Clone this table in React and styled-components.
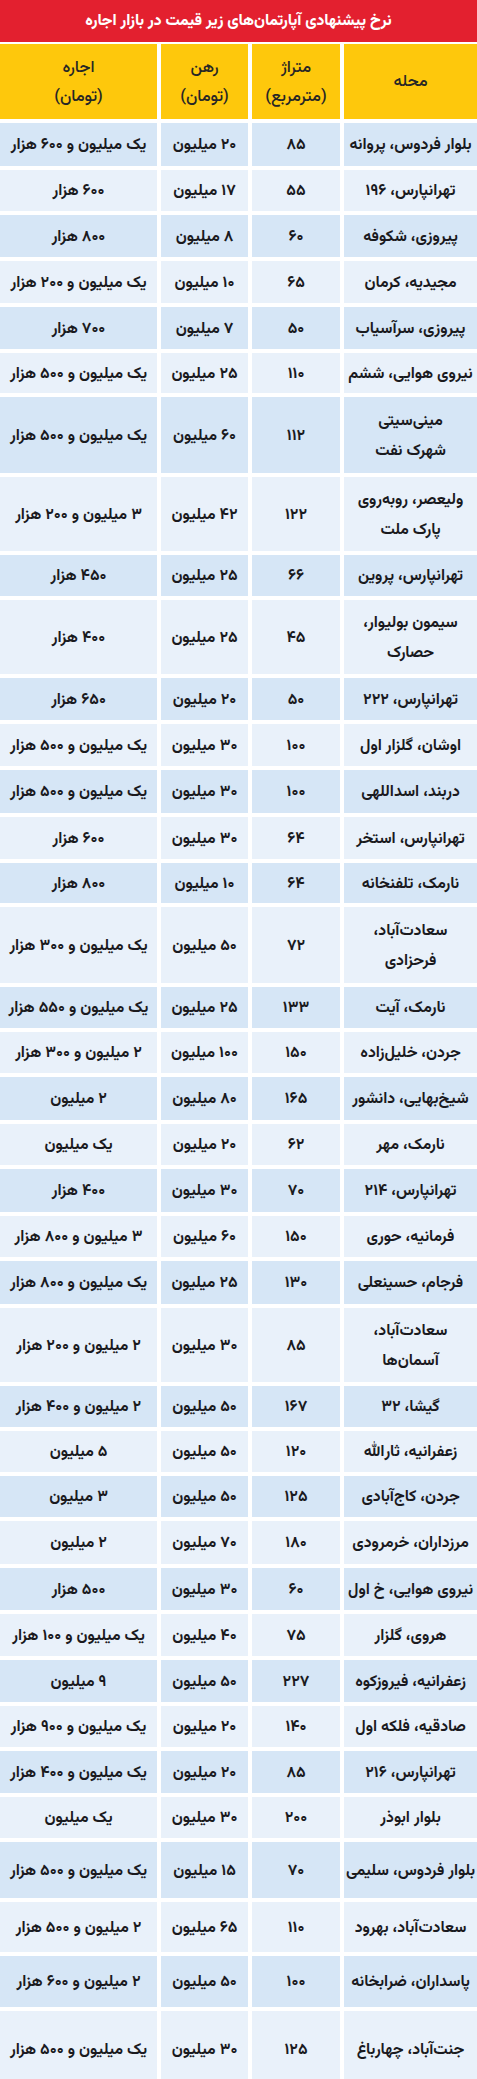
import React from "react";
import styled, { createGlobalStyle } from "styled-components";

const Global = createGlobalStyle`
  html, body { margin: 0; padding: 0; background: #ffffff; }
  body { font-family: "Vazirmatn", "Noto Sans Arabic", "DejaVu Sans", sans-serif; }
`;

const Page = styled.div`
  width: 477px;
  direction: rtl;
  background: #ffffff;
  display: flex;
  flex-direction: column;
`;

const TitleBar = styled.div`
  height: 42px;
  background: #e3202f;
  color: #ffffff;
  display: flex;
  align-items: center;
  justify-content: center;
  font-size: 15.6px;
  font-weight: 800;
  white-space: nowrap;
  padding-bottom: 1px;
  box-sizing: border-box;
`;

const Grid = styled.div`
  margin-top: 2px;
  display: grid;
  grid-template-columns: 133px 88px 87px 157px;
  column-gap: 4px;
  row-gap: 4px;
`;

const HeadCell = styled.div`
  height: 75px;
  background: #fec80c;
  color: #262626;
  display: flex;
  align-items: center;
  justify-content: center;
  text-align: center;
  white-space: pre;
  font-size: 16.5px;
  font-weight: 500;
  line-height: 29px;
  padding-top: 2px;
  box-sizing: border-box;
`;

const Cell = styled.div`
  height: ${(p) => p.$h}px;
  background: ${(p) => (p.$dark ? "#d6e6f6" : "#e9f1fa")};
  color: #1a1a1e;
  display: flex;
  align-items: center;
  justify-content: center;
  text-align: center;
  white-space: pre;
  font-size: 15.8px;
  font-weight: 700;
  line-height: 30px;
  padding-top: 1px;
  box-sizing: border-box;
`;

const rows = [
  ["بلوار فردوس، پروانه", "۸۵", "۲۰ میلیون", "یک میلیون و ۶۰۰ هزار", 43],
  ["تهرانپارس، ۱۹۶", "۵۵", "۱۷ میلیون", "۶۰۰ هزار", 41],
  ["پیروزی، شکوفه", "۶۰", "۸ میلیون", "۸۰۰ هزار", 42],
  ["مجیدیه، کرمان", "۶۵", "۱۰ میلیون", "یک میلیون و ۲۰۰ هزار", 42],
  ["پیروزی، سرآسیاب", "۵۰", "۷ میلیون", "۷۰۰ هزار", 42],
  ["نیروی هوایی، ششم", "۱۱۰", "۲۵ میلیون", "یک میلیون و ۵۰۰ هزار", 40],
  ["مینی‌سیتی\nشهرک نفت", "۱۱۲", "۶۰ میلیون", "یک میلیون و ۵۰۰ هزار", 76],
  ["ولیعصر، روبه‌روی\nپارک ملت", "۱۲۲", "۴۲ میلیون", "۳ میلیون و ۲۰۰ هزار", 74],
  ["تهرانپارس، پروین", "۶۶", "۲۵ میلیون", "۴۵۰ هزار", 41],
  ["سیمون بولیوار،\nحصارک", "۴۵", "۲۵ میلیون", "۴۰۰ هزار", 74],
  ["تهرانپارس، ۲۲۲", "۵۰", "۲۰ میلیون", "۶۵۰ هزار", 42],
  ["اوشان، گلزار اول", "۱۰۰", "۳۰ میلیون", "یک میلیون و ۵۰۰ هزار", 42],
  ["دربند، اسداللهی", "۱۰۰", "۳۰ میلیون", "یک میلیون و ۵۰۰ هزار", 43],
  ["تهرانپارس، استخر", "۶۴", "۳۰ میلیون", "۶۰۰ هزار", 42],
  ["نارمک، تلفنخانه", "۶۴", "۱۰ میلیون", "۸۰۰ هزار", 40],
  ["سعادت‌آباد،\nفرحزادی", "۷۲", "۵۰ میلیون", "یک میلیون و ۳۰۰ هزار", 76],
  ["نارمک، آیت", "۱۳۳", "۲۵ میلیون", "یک میلیون و ۵۵۰ هزار", 41],
  ["جردن، خلیل‌زاده", "۱۵۰", "۱۰۰ میلیون", "۲ میلیون و ۳۰۰ هزار", 41],
  ["شیخ‌بهایی، دانشور", "۱۶۵", "۸۰ میلیون", "۲ میلیون", 43],
  ["نارمک، مهر", "۶۲", "۲۰ میلیون", "یک میلیون", 41],
  ["تهرانپارس، ۲۱۴", "۷۰", "۳۰ میلیون", "۴۰۰ هزار", 43],
  ["فرمانیه، حوری", "۱۵۰", "۶۰ میلیون", "۳ میلیون و ۸۰۰ هزار", 41],
  ["فرجام، حسینعلی", "۱۳۰", "۲۵ میلیون", "یک میلیون و ۸۰۰ هزار", 43],
  ["سعادت‌آباد،\nآسمان‌ها", "۸۵", "۳۰ میلیون", "۲ میلیون و ۲۰۰ هزار", 74],
  ["گیشا، ۳۲", "۱۶۷", "۵۰ میلیون", "۲ میلیون و ۴۰۰ هزار", 41],
  ["زعفرانیه، ثارالله", "۱۲۰", "۵۰ میلیون", "۵ میلیون", 41],
  ["جردن، کاج‌آبادی", "۱۲۵", "۵۰ میلیون", "۳ میلیون", 41],
  ["مرزداران، خرمرودی", "۱۸۰", "۷۰ میلیون", "۲ میلیون", 43],
  ["نیروی هوایی، خ اول", "۶۰", "۳۰ میلیون", "۵۰۰ هزار", 42],
  ["هروی، گلزار", "۷۵", "۴۰ میلیون", "یک میلیون و ۱۰۰ هزار", 42],
  ["زعفرانیه، فیروزکوه", "۲۲۷", "۵۰ میلیون", "۹ میلیون", 42],
  ["صادقیه، فلکه اول", "۱۴۰", "۲۰ میلیون", "یک میلیون و ۹۰۰ هزار", 41],
  ["تهرانپارس، ۲۱۶", "۸۵", "۲۰ میلیون", "یک میلیون و ۴۰۰ هزار", 42],
  ["بلوار ابوذر", "۲۰۰", "۳۰ میلیون", "یک میلیون", 41],
  ["بلوار فردوس، سلیمی", "۷۰", "۱۵ میلیون", "یک میلیون و ۵۰۰ هزار", 56],
  ["سعادت‌آباد، بهرود", "۱۱۰", "۶۵ میلیون", "۲ میلیون و ۵۰۰ هزار", 50],
  ["پاسداران، ضرابخانه", "۱۰۰", "۵۰ میلیون", "۲ میلیون و ۶۰۰ هزار", 51],
  ["جنت‌آباد، چهارباغ", "۱۲۵", "۳۰ میلیون", "یک میلیون و ۵۰۰ هزار", 76],
];

const headers = ["محله", "متراژ\n(مترمربع)", "رهن\n(تومان)", "اجاره\n(تومان)"];

export default function App() {
  return (
    <Page>
      <Global />
      <TitleBar>نرخ پیشنهادی آپارتمان‌های زیر قیمت در بازار اجاره</TitleBar>
      <Grid>
        {headers.map((h) => (
          <HeadCell key={h}>{h}</HeadCell>
        ))}
        {rows.map((r, i) => {
          const dark = i % 2 === 0;
          return (
            <React.Fragment key={i}>
              <Cell $h={r[4]} $dark={dark}>{r[0]}</Cell>
              <Cell $h={r[4]} $dark={dark}>{r[1]}</Cell>
              <Cell $h={r[4]} $dark={dark}>{r[2]}</Cell>
              <Cell $h={r[4]} $dark={dark}>{r[3]}</Cell>
            </React.Fragment>
          );
        })}
      </Grid>
    </Page>
  );
}
